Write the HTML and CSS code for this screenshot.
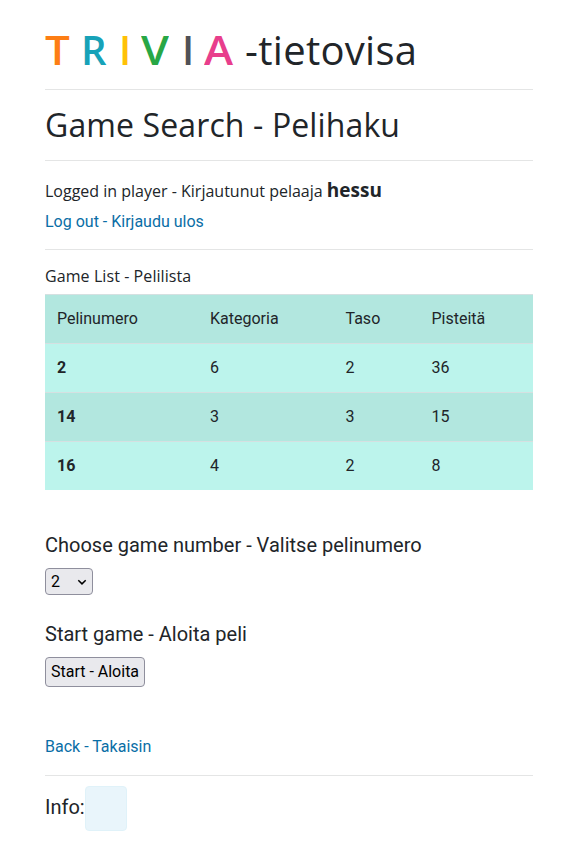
FILE: index.html
```html
<!DOCTYPE html>
<html lang="fi">
<head>
<meta charset="utf-8">
<title>TRIVIA - tietovisa</title>
<link rel="stylesheet" href="styles.css">
</head>
<body>
<main class="container">
  <h1 class="brand"><span class="letters"><b class="t">T</b> <b class="r">R</b> <b class="i">I</b> <b class="v">V</b> <b class="i2">I</b> <b class="a">A</b></span> <span class="brand-name">-tietovisa</span></h1>
  <hr>
  <h2 class="title"><span>Game Search - Pelihaku</span></h2>
  <hr>
  <p class="player"><span class="player-label">Logged in player - Kirjautunut pelaaja</span> <strong>hessu</strong></p>
  <p class="logout"><a href="#">Log out - Kirjaudu ulos</a></p>
  <hr>
  <p class="list-title"><span>Game List - Pelilista</span></p>
  <table class="games">
    <thead><tr><td>Pelinumero</td><td>Kategoria</td><td>Taso</td><td>Pisteitä</td></tr></thead>
    <tbody>
      <tr><th>2</th><td>6</td><td>2</td><td>36</td></tr>
      <tr><th>14</th><td>3</td><td>3</td><td>15</td></tr>
      <tr><th>16</th><td>4</td><td>2</td><td>8</td></tr>
    </tbody>
  </table>
  <h5 class="choose">Choose game number - Valitse pelinumero</h5>
  <div class="select" role="combobox"><span>2</span><svg width="10" height="10" viewBox="0 0 10 10"><path d="M1.3 3.2 5 6.9 8.7 3.2" fill="none" stroke="#000" stroke-width="1.5"/></svg></div>
  <h5 class="start">Start game - Aloita peli</h5>
  <button class="button" type="button">Start - Aloita</button>
  <p class="back"><a href="#">Back - Takaisin</a></p>
  <hr>
  <div class="info"><span>Info:</span><div class="info-box"></div></div>
</main>
</body>
</html>
```
FILE: styles.css
```css
* { box-sizing: border-box; }
body { margin: 0; background: #fff; color: #212529; font: 16px/24px Roboto, sans-serif; }
.container { width: 488px; margin-left: 45px; padding-top: 26px; }
h1, h2, h5, p { margin: 0; font-weight: 400; }
hr { margin: 0; border: 0; border-top: 1px solid #e4e5e5; }
a { color: #0a6ea6; text-decoration: none; }
.brand { display: flex; height: 63px; font: 40px/47px "Open Sans", sans-serif; white-space: nowrap; }
.letters { display: flex; width: 200px; }
.letters b { font-weight: 600; transform-origin: left; }
.t { width: 36px; color: #fd7e14; transform: scaleX(1.1); }
.r { width: 38px; color: #17a2b8; }
.i { width: 22px; color: #ffc107; }
.v { width: 41px; color: #28a745; transform: scaleX(1.12); }
.i2 { width: 22px; color: #505157; }
.a { color: #e83e8c; transform: scaleX(1.1); }
.brand-name { letter-spacing: .3px; }
.title { height: 70px; padding-top: 16px; font: 32px/38px "Open Sans", sans-serif; letter-spacing: .12px; }
.player { height: 49px; padding-top: 17px; font-family: "Open Sans", sans-serif; white-space: nowrap; }
.player-label { font-size: 16px; }
.player strong { font-size: 19px; }
.logout { height: 39px; }
.list-title { height: 44px; padding-top: 14px; font: 16px/24px "Open Sans", sans-serif; letter-spacing: .08px; }
.games { width: 488px; height: 196px; table-layout: fixed; border-spacing: 0; }
.games td, .games th { height: 49px; padding: 0 12px; border-top: 1px solid #d5e0e1; text-align: left; }
.games td:first-child { width: 153px; }
.games td:nth-child(2) { width: 135.5px; }
.games td:nth-child(3) { width: 86px; }
.games tr { background: #b2e7df; }
.games tbody tr:nth-child(odd) { background: #bcf4ec; }
.choose, .start { font-size: 20px; line-height: 24px; }
.choose { margin-top: 43px; }
.select { display: flex; align-items: center; justify-content: space-between; width: 48px; height: 27px; margin-top: 11px; padding: 0 5px; border: 1px solid #8f8f9d; border-radius: 4px; background: #e9e9ed; color: #000; }
.start { margin-top: 27px; }
.button { display: block; width: 100px; height: 30px; margin-top: 11px; padding: 0; border: 1px solid #8f8f9d; border-radius: 4px; background: #e9e9ed; color: #000; font: 16px/24px Roboto, sans-serif; }
.back { height: 88px; padding-top: 48px; }
.info { display: flex; padding-top: 10px; font-size: 20px; line-height: 42px; }
.info-box { width: 42px; height: 45px; border: 1px solid #e0f2f9; border-radius: 4px; background: #e9f5fb; }
```
